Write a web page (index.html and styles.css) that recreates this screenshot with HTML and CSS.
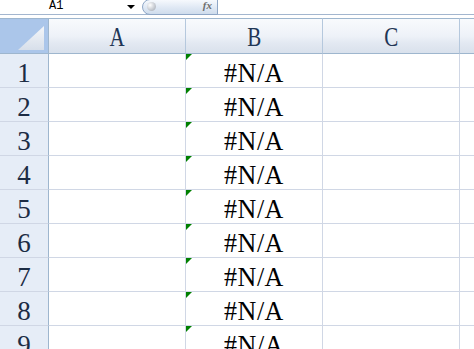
FILE: index.html
```
<!DOCTYPE html>
<html lang="en">
<head>
<meta charset="UTF-8" />
<title>Sheet1</title>
<link rel="stylesheet" href="styles.css">
</head>
<body>

<div class="formula-bar">
  <div class="name-box">A1</div>
  <div class="name-drop"></div>
  <div class="fx-pill">
    <span class="knob"></span>
    <span class="fx">fx</span>
  </div>
</div>

<div class="sheet">
  <div class="corner"><span class="corner-tri"></span></div>
  <div class="col-head"><span>A</span></div>
  <div class="col-head"><span>B</span></div>
  <div class="col-head"><span>C</span></div>
  <div class="col-head"></div>
</div>

<div class="sheet" id="rows"></div>

<script>
  const rows = document.getElementById('rows');
  for (let i = 1; i <= 9; i++) {
    rows.insertAdjacentHTML('beforeend', `
      <div class="row-head">${i}</div>
      <div class="cell"></div>
      <div class="cell err"><span class="flag"></span><span class="val">#N/A</span></div>
      <div class="cell"></div>
      <div class="cell"></div>
    `);
  }
</script>

</body>
</html>
```

FILE: styles.css
```
body { margin: 0; background: #fff; overflow: hidden; font-family: "Liberation Serif", serif; }

.formula-bar { height: 14px; border-bottom: 1px solid #a3b6cf; position: relative; margin-bottom: 3px; }
.name-box { position: absolute; left: 49px; top: 0; font: 12px/13px "Liberation Mono", monospace; color: #000; }
.name-drop { position: absolute; left: 127px; top: 5px; width: 0; height: 0;
  border-left: 4px solid transparent; border-right: 4px solid transparent; border-top: 4px solid #000; }
.fx-pill { position: absolute; left: 142px; top: -1px; width: 74px; height: 14px;
  border: 1px solid #8ea6c6; border-radius: 8px 0 0 8px;
  background: linear-gradient(#f6f9fd, #dfe8f4 55%, #cfdcec); }
.knob { position: absolute; left: 4px; top: 2px; width: 9px; height: 9px; border-radius: 50%;
  background: radial-gradient(circle at 35% 35%, #fff, #b9bec6 70%); }
.fx { position: absolute; right: 5px; top: -1px; font: italic 11px "Liberation Serif", serif; color: #6d6d6d; font-weight: bold; }

.sheet { display: grid; grid-template-columns: 49px 137px 137px 137px 137px; }

.corner, .col-head { height: 34px; border-top: 1px solid #9eb6ce; border-bottom: 1px solid #9eb6ce; box-sizing: content-box; }
.corner { background: #abc6ea; border-right: 1px solid #9eb6ce; position: relative; }
.corner-tri { position: absolute; right: 4px; bottom: 3px; width: 26px; height: 24px;
  background: linear-gradient(#f4f6f9, #d7dfea); clip-path: polygon(100% 0, 100% 100%, 0 100%); }
.col-head { background: linear-gradient(#f8fafd, #eef2f8 50%, #e3e9f2 70%, #d9e1ec);
  border-right: 1px solid #b5c8dd; text-align: center; font-size: 28px; line-height: 36px; color: #1f3656; }
.col-head span { display: inline-block; transform: scaleX(0.75); }

.row-head, .cell { height: 33px; border-bottom: 1px solid #d0d7e5; }
.row-head { background: #e6edf7; border-right: 1px solid #9eb6ce; text-align: center;
  font-size: 27px; line-height: 38px; color: #1c2c44; }
.cell { border-right: 1px solid #d0d7e5; position: relative; }
.err { text-align: center; font-size: 26px; line-height: 38px; color: #000; }
.val { display: inline-block; transform: scaleY(1.08); letter-spacing: 0.5px; }
.flag { position: absolute; left: 0; top: 0; width: 6px; height: 6px; background: #008000;
  clip-path: polygon(0 0, 100% 0, 0 100%); }
```
